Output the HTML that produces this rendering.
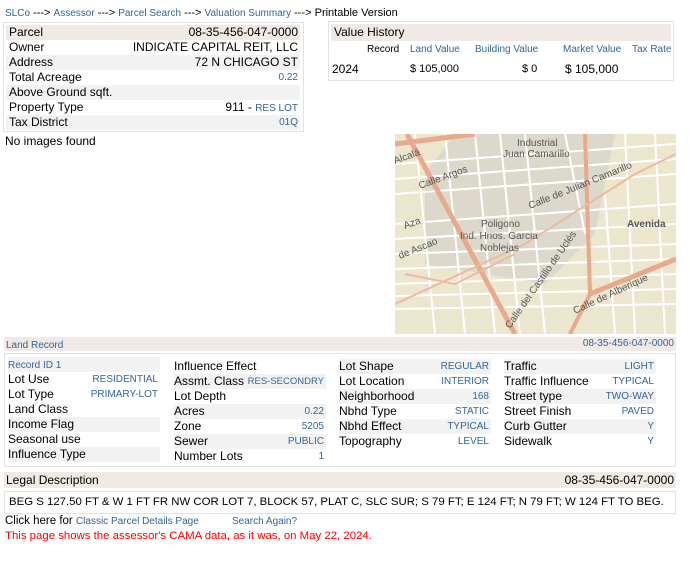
<!DOCTYPE html>
<html><head><meta charset="utf-8"><style>
*{margin:0;padding:0;box-sizing:border-box}
body{width:690px;height:570px;background:#fff;font-family:"Liberation Sans",sans-serif;font-size:12px;color:#000;position:relative;overflow:hidden}
.a{position:absolute}
.b{color:#336699}
.s{font-size:10px;color:#336699}
.box{position:absolute;border:1px solid #e2e2e2}
.row{position:absolute;height:15px;line-height:15px;white-space:nowrap}
.row .r{position:absolute;right:2px;top:0}
.sh{background:#f2f2f2}
.hd{background:#f0e9e5}
</style></head><body>
<div class="a" style="left:5px;top:6px;font-size:11px;line-height:14px"><span class="b" style="font-size:10px">SLCo</span> ---&gt; <span class="b" style="font-size:10px">Assessor</span> ---&gt; <span class="b" style="font-size:10px">Parcel Search</span> ---&gt; <span class="b" style="font-size:10px">Valuation Summary</span> ---&gt; Printable Version</div>

<div class="box" style="left:3px;top:22px;width:301px;height:110px"></div>
<div class="row hd" style="left:6px;top:25px;width:294px;padding-left:3px">Parcel<span class="r">08-35-456-047-0000</span></div>
<div class="row" style="left:6px;top:40px;width:294px;padding-left:3px">Owner<span class="r">INDICATE CAPITAL REIT, LLC</span></div>
<div class="row sh" style="left:6px;top:55px;width:294px;padding-left:3px">Address<span class="r">72 N CHICAGO ST</span></div>
<div class="row" style="left:6px;top:70px;width:294px;padding-left:3px">Total Acreage<span class="r s">0.22</span></div>
<div class="row sh" style="left:6px;top:85px;width:294px;padding-left:3px">Above Ground sqft.</div>
<div class="row" style="left:6px;top:100px;width:294px;padding-left:3px">Property Type<span class="r">911 - <span class="s">RES LOT</span></span></div>
<div class="row sh" style="left:6px;top:115px;width:294px;padding-left:3px">Tax District<span class="r s">01Q</span></div>
<div class="a" style="left:5px;top:134px">No images found</div>

<div class="box" style="left:328px;top:21px;width:346px;height:60px"></div>
<div class="row hd" style="left:331px;top:24px;width:340px;height:17px;line-height:17px;padding-left:3px">Value History</div>
<div class="a s" style="left:367px;top:44px;color:#000">Record</div>
<div class="a s" style="left:410px;top:44px">Land Value</div>
<div class="a s" style="left:475px;top:44px">Building Value</div>
<div class="a s" style="left:563px;top:44px">Market Value</div>
<div class="a s" style="left:632px;top:44px">Tax Rate</div>
<div class="a" style="left:332px;top:62px;font-size:12px">2024</div>
<div class="a" style="left:410px;top:63px;font-size:11px">$ 105,000</div>
<div class="a" style="left:522px;top:63px;font-size:11px">$ 0</div>
<div class="a" style="left:565px;top:62px;font-size:12px">$ 105,000</div>

<svg class="a" style="left:395px;top:134px" width="281" height="200" viewBox="0 0 281 200">
<rect width="281" height="200" fill="#ece6cf"/>
<polygon points="60,0 220,0 200,100 150,150 30,130 30,40" fill="#dcd8cb"/>
<g stroke="#fff" stroke-width="2" fill="none">
<path d="M0,30 L281,10 M0,60 L281,40 M0,90 L281,70 M0,120 L281,110 M0,150 L281,140 M0,175 L281,170 M20,0 L40,200 M80,0 L100,200 M130,0 L150,200 M230,0 L240,200 M260,0 L270,200 M170,0 L190,100 M0,45 L281,25 M0,105 L281,90 M0,135 L281,125 M0,162 L281,155 M50,0 L70,200 M105,0 L125,200 M210,60 L220,200"/>
</g>
<g stroke="#e9a98c" stroke-width="5" fill="none">
<path d="M0,10 L80,0 M12,0 L120,200"/>
<path d="M190,0 L195,160 L175,200" stroke-width="4"/>
<path d="M195,160 L281,125" />
</g>
<g stroke="#efb9a0" stroke-width="2" fill="none">
<path d="M0,170 L130,110 L240,40 L281,20 M10,140 L60,150 L120,120"/>
</g>
<g font-family="Liberation Sans,sans-serif" font-size="10" fill="#555">
<text x="122" y="12">Industrial</text><text x="108" y="23">Juan Camarillo</text>
<text x="0" y="30" transform="rotate(-20 0 30)">Alcalá</text>
<text x="25" y="55" transform="rotate(-20 25 55)">Calle Argos</text>
<text x="135" y="75" transform="rotate(-22 135 75)">Calle de Julian Camarillo</text>
<text x="232" y="93" font-weight="bold">Avenida</text>
<text x="86" y="93">Poligono</text><text x="65" y="105">Ind. Hnos. Garcia</text><text x="85" y="117">Noblejas</text>
<text x="5" y="125" transform="rotate(-22 5 125)">de Ascao</text>
<text x="10" y="95" transform="rotate(-20 10 95)">Aza</text>
<text x="115" y="195" transform="rotate(-55 115 195)">Calle del Castillo de Uclés</text>
<text x="180" y="180" transform="rotate(-25 180 180)">Calle de Alberique</text>
</g>
</svg>

<div class="row hd" style="left:4px;top:337px;width:672px;height:14px;line-height:14px;padding-left:2px"><span class="s" style="font-size:10px">Land Record</span><span class="r s">08-35-456-047-0000</span></div>
<div class="box" style="left:4px;top:353px;width:672px;height:114px"></div>

<div class="row sh" style="left:8px;top:357px;width:152px"><span class="s">Record ID 1</span></div>
<div class="row" style="left:8px;top:372px;width:152px">Lot Use<span class="r s">RESIDENTIAL</span></div>
<div class="row" style="left:8px;top:387px;width:152px">Lot Type<span class="r s">PRIMARY-LOT</span></div>
<div class="row" style="left:8px;top:402px;width:152px">Land Class</div>
<div class="row sh" style="left:8px;top:417px;width:152px">Income Flag</div>
<div class="row" style="left:8px;top:432px;width:152px">Seasonal use</div>
<div class="row sh" style="left:8px;top:447px;width:152px">Influence Type</div>

<div class="row" style="left:174px;top:359px;width:152px">Influence Effect</div>
<div class="row sh" style="left:174px;top:374px;width:152px">Assmt. Class<span class="r s" style="font-size:9.5px">RES-SECONDRY</span></div>
<div class="row" style="left:174px;top:389px;width:152px">Lot Depth</div>
<div class="row sh" style="left:174px;top:404px;width:152px">Acres<span class="r s">0.22</span></div>
<div class="row" style="left:174px;top:419px;width:152px">Zone<span class="r s">5205</span></div>
<div class="row sh" style="left:174px;top:434px;width:152px">Sewer<span class="r s">PUBLIC</span></div>
<div class="row" style="left:174px;top:449px;width:152px">Number Lots<span class="r s">1</span></div>

<div class="row sh" style="left:339px;top:359px;width:152px">Lot Shape<span class="r s">REGULAR</span></div>
<div class="row" style="left:339px;top:374px;width:152px">Lot Location<span class="r s">INTERIOR</span></div>
<div class="row sh" style="left:339px;top:389px;width:152px">Neighborhood<span class="r s">168</span></div>
<div class="row" style="left:339px;top:404px;width:152px">Nbhd Type<span class="r s">STATIC</span></div>
<div class="row sh" style="left:339px;top:419px;width:152px">Nbhd Effect<span class="r s">TYPICAL</span></div>
<div class="row" style="left:339px;top:434px;width:152px">Topography<span class="r s">LEVEL</span></div>

<div class="row sh" style="left:504px;top:359px;width:152px">Traffic<span class="r s">LIGHT</span></div>
<div class="row" style="left:504px;top:374px;width:152px">Traffic Influence<span class="r s">TYPICAL</span></div>
<div class="row sh" style="left:504px;top:389px;width:152px">Street type<span class="r s">TWO-WAY</span></div>
<div class="row" style="left:504px;top:404px;width:152px">Street Finish<span class="r s">PAVED</span></div>
<div class="row sh" style="left:504px;top:419px;width:152px">Curb Gutter<span class="r s">Y</span></div>
<div class="row" style="left:504px;top:434px;width:152px">Sidewalk<span class="r s">Y</span></div>

<div class="row hd" style="left:4px;top:472px;width:672px;height:16px;line-height:16px;padding-left:2px">Legal Description<span class="r">08-35-456-047-0000</span></div>
<div class="box" style="left:4px;top:491px;width:672px;height:23px"></div>
<div class="a" style="left:9px;top:496px;font-size:11.4px;white-space:nowrap">BEG S 127.50 FT &amp; W 1 FT FR NW COR LOT 7, BLOCK 57, PLAT C, SLC SUR; S 79 FT; E 124 FT; N 79 FT; W 124 FT TO BEG.</div>
<div class="a" style="left:5px;top:515px;font-size:11.5px">Click here for <span class="s">Classic Parcel Details Page</span></div>
<div class="a s" style="left:232px;top:516px">Search Again?</div>
<div class="a" style="left:5px;top:530px;font-size:11.4px;color:#f00">This page shows the assessor's CAMA data, as it was, on May 22, 2024.</div>
</body></html>
